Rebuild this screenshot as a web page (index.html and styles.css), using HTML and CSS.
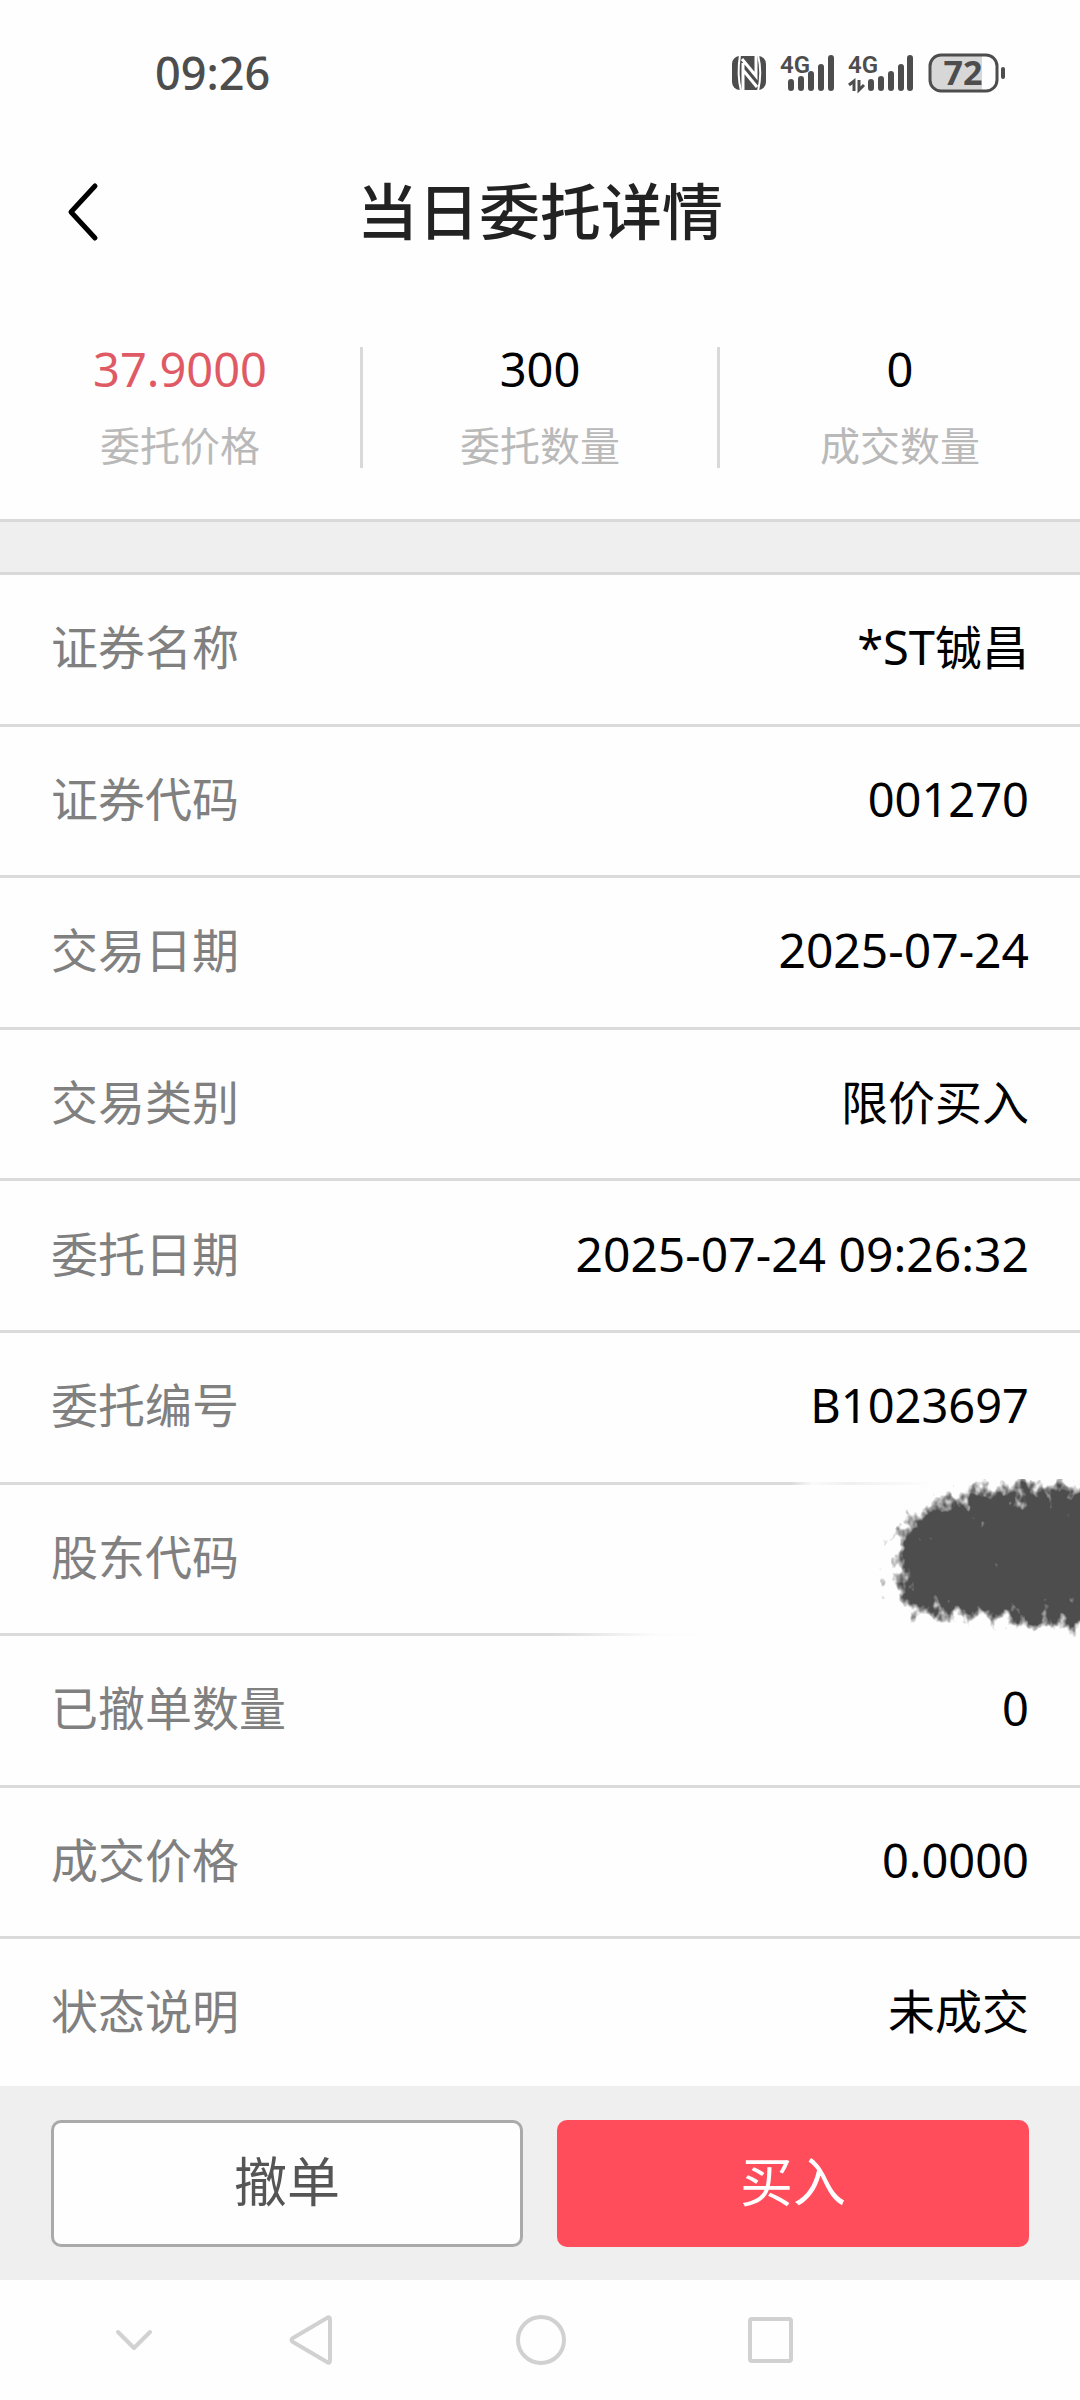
FILE: index.html
```html
<!DOCTYPE html>
<html lang="zh-CN">
<head>
<meta charset="utf-8">
<meta name="viewport" content="width=device-width, initial-scale=1">
<title>当日委托详情</title>
<link rel="stylesheet" href="styles.css">
</head>
<body>
<div class="status-bar">
  <time class="clock">09:26</time>
  <svg class="status-icons" width="276" height="80" viewBox="0 -20 276 80" aria-hidden="true">
    <rect x="2" y="3" width="34" height="34" rx="8" fill="#4d4d4d"/>
    <path d="M10 2C8 14 8 26 11 38M28 2C31 14 31 26 28 38" fill="none" stroke="#fff" stroke-width="2"/>
    <path d="M13 10V38M13 17L27 34M12 6L26 23V2" fill="none" stroke="#fff" stroke-width="3"/>
    <text class="net" x="50" y="20">4G</text>
    <g class="bars">
      <path d="M61 29V35M71 26V35M81 21V35M91 14V35M101 5V35"/>
      <path d="M141 29V35M151 26V35M161 21V35M171 14V35M180 5V35"/>
    </g>
    <text class="net" x="118" y="20">4G</text>
    <path d="M119 32L124 28V38M129 27V37L134 32" fill="none" stroke="#4d4d4d" stroke-width="3"/>
    <path d="M210 2H252V38H210A10 10 0 0 1 200 28V12A10 10 0 0 1 210 2Z" fill="#d7d7d7"/>
    <rect x="200" y="2" width="67" height="36" rx="11" fill="none" stroke="#4d4d4d" stroke-width="3"/>
    <path d="M273 16V24" stroke="#4d4d4d" stroke-width="4" stroke-linecap="round"/>
    <text class="charge" x="233" y="32">72</text>
  </svg>
</div>

<header class="header">
  <button class="back" type="button" aria-label="返回">
    <svg width="36" height="60" viewBox="0 0 36 60" aria-hidden="true">
      <path d="M29 4L5 30L29 56" fill="none" stroke="#000" stroke-width="5" stroke-linecap="round" stroke-linejoin="round"/>
    </svg>
  </button>
  <h1 class="title">当日委托详情</h1>
</header>

<section class="summary">
  <div class="stat"><strong class="stat-value price">37.9000</strong><span class="stat-label">委托价格</span></div>
  <div class="stat"><strong class="stat-value">300</strong><span class="stat-label">委托数量</span></div>
  <div class="stat"><strong class="stat-value">0</strong><span class="stat-label">成交数量</span></div>
</section>
<div class="band"></div>

<dl class="details">
  <div class="row"><dt>证券名称</dt><dd>*ST铖昌</dd></div>
  <div class="row"><dt>证券代码</dt><dd>001270</dd></div>
  <div class="row"><dt>交易日期</dt><dd class="date">2025-07-24</dd></div>
  <div class="row"><dt>交易类别</dt><dd>限价买入</dd></div>
  <div class="row"><dt>委托日期</dt><dd class="date">2025-07-24 09:26:32</dd></div>
  <div class="row"><dt>委托编号</dt><dd>B1023697</dd></div>
  <div class="row redacted"><dt>股东代码</dt><dd>
    <svg class="smudge" width="540" height="162" viewBox="0 0 540 162" aria-hidden="true">
      <defs>
        <linearGradient id="fade"><stop offset="0" stop-color="#fefefe" stop-opacity="0"/><stop offset=".2" stop-color="#fefefe" stop-opacity=".95"/><stop offset=".35" stop-color="#fefefe"/></linearGradient>
        <linearGradient id="fade-top"><stop offset="0" stop-color="#fefefe" stop-opacity="0"/><stop offset=".08" stop-color="#fefefe" stop-opacity=".9"/><stop offset=".2" stop-color="#fefefe" stop-opacity=".6"/><stop offset=".5" stop-color="#fefefe"/></linearGradient>
        <filter id="ink" x="-20%" y="-30%" width="140%" height="160%" color-interpolation-filters="sRGB">
          <feGaussianBlur in="SourceAlpha" stdDeviation="14" result="soft"/>
          <feTurbulence type="fractalNoise" baseFrequency=".08 .06" numOctaves="3" seed="7"/>
          <feColorMatrix values="0 0 0 0 0  0 0 0 0 0  0 0 0 0 0  1 0 0 0 0" result="grain"/>
          <feComposite in="soft" in2="grain" operator="arithmetic" k1="0" k2="3" k3="3" k4="-2.6" result="edge"/>
          <feFlood flood-color="#4d4d4d"/>
          <feComposite in2="edge" operator="in"/>
        </filter>
      </defs>
      <rect x="10" y="152" width="530" height="9" fill="url(#fade)"/>
      <rect x="250" y="2" width="290" height="6" fill="url(#fade-top)"/>
      <path filter="url(#ink)" d="M362 50L384 28L418 18L435 10L490 8L600 6V142L520 146L484 144L454 138L400 136L362 132L354 110L358 86Z"/>
    </svg>
  </dd></div>
  <div class="row"><dt>已撤单数量</dt><dd>0</dd></div>
  <div class="row"><dt>成交价格</dt><dd>0.0000</dd></div>
  <div class="row"><dt>状态说明</dt><dd>未成交</dd></div>
</dl>

<footer class="actions">
  <button class="action cancel" type="button">撤单</button>
  <button class="action buy" type="button">买入</button>
</footer>

<nav class="system-nav" aria-label="系统导航">
  <button type="button" aria-label="收起"><svg width="60" height="60" viewBox="0 0 60 60"><path d="M14 22L30 38L46 22"/></svg></button>
  <button type="button" aria-label="返回"><svg width="60" height="60" viewBox="0 0 60 60"><path d="M46 8Q49 6 49 10V50Q49 54 46 52L12 32Q9 30 12 28Z"/></svg></button>
  <button type="button" aria-label="主页"><svg width="60" height="60" viewBox="0 0 60 60"><circle cx="30" cy="30" r="23"/></svg></button>
  <button type="button" aria-label="最近任务"><svg width="60" height="60" viewBox="0 0 60 60"><rect x="9" y="9" width="41" height="42" rx="2"/></svg></button>
</nav>
</body>
</html>
```
FILE: styles.css
```css
* { box-sizing: border-box; }

body {
  margin: 0;
  min-height: 100vh;
  display: flex;
  flex-direction: column;
  background: #fefefe;
  color: #000;
  font-family: "Noto Sans", "Noto Sans CJK SC", sans-serif;
  font-size: 47px;
}

button {
  margin: 0;
  padding: 0;
  border: 0;
  background: none;
  color: inherit;
  font: inherit;
}

svg { display: block; }

.status-bar {
  height: 146px;
  padding: 0 74px 0 155px;
  display: flex;
  align-items: center;
  justify-content: space-between;
  color: #4d4d4d;
}

.clock {
  font-size: 45px;
  line-height: 46px;
  font-weight: 500;
}

.net, .charge { fill: #4d4d4d; }

.net {
  font-family: Roboto, sans-serif;
  font-size: 24px;
  font-weight: 600;
}

.charge {
  font-size: 34px;
  font-weight: 700;
  text-anchor: middle;
}

.bars {
  stroke: #4d4d4d;
  stroke-width: 6px;
  stroke-linecap: round;
}

.header {
  height: 134px;
  padding: 0 66px 2px;
  display: grid;
  grid-template-columns: 1fr auto 1fr;
  align-items: center;
}

.back { justify-self: start; }

.title {
  margin: 0;
  color: #222;
  font-size: 61px;
  line-height: 80px;
  font-weight: 500;
}

.summary {
  padding: 67px 0 51px;
  display: grid;
  grid-template-columns: repeat(3, 1fr);
}

.stat {
  display: flex;
  flex-direction: column;
  align-items: center;
  gap: 33px;
}

.stat:nth-child(2) {
  border: solid #d9d9d9;
  border-width: 0 3px;
}

.stat-value {
  font-size: 47px;
  line-height: 44px;
  font-weight: 400;
}

.price { color: #e05a65; }

.stat-label {
  color: #b9b9b9;
  font-size: 40px;
  line-height: 44px;
}

.band {
  height: 56px;
  border: solid #d9d9d9;
  border-width: 3px 0;
  background: #efefef;
}

.details {
  flex: 1;
  margin: 0;
  display: flex;
  flex-direction: column;
}

.row {
  flex: 152 1 0;
  padding: 0 51px 4px;
  display: flex;
  align-items: center;
  justify-content: space-between;
  border-bottom: 3px solid #dadada;
  line-height: 64px;
}

.row:last-child {
  flex-grow: 150;
  border-bottom: 0;
}

.row dt { color: #808080; }
.row dd { margin: 0; }
.row .date { font-size: 48px; }

.redacted { position: relative; }

.smudge {
  position: absolute;
  top: -6px;
  right: 0;
}

.actions {
  padding: 34px 51px 33px;
  display: grid;
  grid-template-columns: 1fr 1fr;
  gap: 34px;
  background: #efefef;
}

.action {
  height: 127px;
  padding-bottom: 8px;
  border-radius: 10px;
  font-size: 53px;
}

.cancel {
  border: 3px solid #aaa;
  background: #fefefe;
  color: #555;
}

.buy {
  background: #ff4d5b;
  color: #fff;
}

.system-nav {
  height: 120px;
  padding: 0 18% 0 72px;
  display: grid;
  grid-template-columns: 124fr 231fr 231fr 231fr;
  align-items: center;
  justify-items: center;
}

.system-nav svg {
  fill: none;
  stroke: #d1d1d1;
  stroke-width: 4px;
  stroke-linecap: round;
  stroke-linejoin: round;
}
```
